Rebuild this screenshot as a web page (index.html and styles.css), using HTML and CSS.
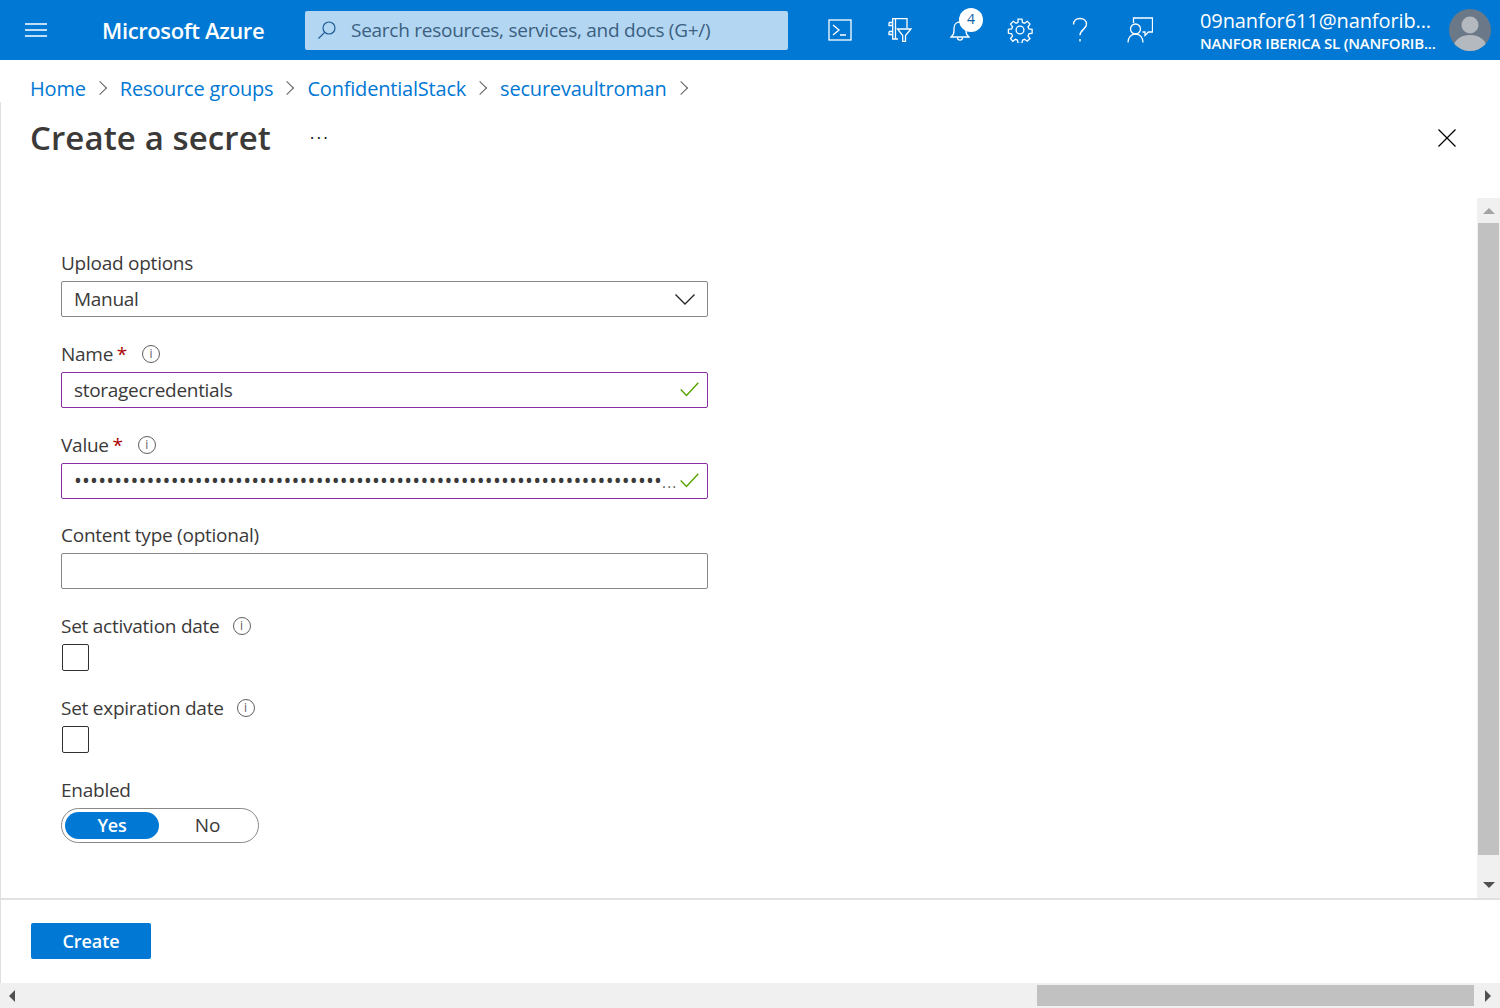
FILE: index.html
```html
<!DOCTYPE html>
<html lang="en">
<head>
    <meta charset="UTF-8">
    <title>Create a secret - Microsoft Azure</title>
    <link rel="stylesheet" href="styles.css">
</head>
<body>
    <header class="topbar">
        <button class="menu-btn" aria-label="Menu">
            <svg width="24" height="16" viewBox="0 0 24 16"><path d="M1 2h22M1 8h22M1 14h22" stroke="#fff" stroke-width="1.3" fill="none"/></svg>
        </button>
        <div class="brand">Microsoft Azure</div>
        <div class="search">
            <svg width="20" height="20" viewBox="0 0 20 20" fill="none" stroke="#1d5a94" stroke-width="1.2"><circle cx="12" cy="8" r="6"/><path d="M7.6 12.4 1.5 18.5"/></svg>
            <span>Search resources, services, and docs (G+/)</span>
        </div>
        <div class="top-icons">
            <button class="top-icon" aria-label="Cloud Shell">
                <svg width="24" height="22" viewBox="0 0 24 22" fill="none" stroke="#fff" stroke-width="1.3"><rect x="1" y="1" width="22" height="20"/><path d="M5 6l6 5-6 5M12 16h6"/></svg>
            </button>
            <button class="top-icon" aria-label="Directories">
                <svg width="24" height="24" viewBox="0 0 24 24" fill="none" stroke="#fff" stroke-width="1.3"><path d="M19 10V.7H4.700V21H10"/><path d="M7.500 .7V21M1 4.500h3.700M1 4.500v3h3.700M1 13.500h3.700M1 13.500v3h3.700"/><path d="M9.500 11H23l-5.500 6.500v6h-2.800v-6z"/></svg>
            </button>
            <button class="top-icon notif" aria-label="Notifications">
                <svg width="20" height="23" viewBox="0 0 20 23" fill="none" stroke="#fff" stroke-width="1.300"><path d="M1 18h18c-2-1.500-3-3-3-6V9c0-3.500-2.500-6-6-6S4 5.500 4 9v3c0 3-1 4.500-3 6z"/><path d="M7.500 18.500c0 3.500 5 3.500 5 0"/></svg>
                <span class="badge">4</span>
            </button>
            <button class="top-icon" aria-label="Settings">
                <svg width="26" height="26" viewBox="0 0 24 24" fill="none" stroke="#fff" stroke-width="1.200"><circle cx="12" cy="12" r="3.600"/><path d="M10.200 2h3.600l.5 3 1.900.8 2.500-1.800 2.500 2.500-1.800 2.500.8 1.900 3 .5v3.600l-3 .5-.8 1.900 1.800 2.500-2.500 2.500-2.500-1.800-1.900.8-.5 3h-3.600l-.5-3-1.900-.8-2.500 1.800L3.300 19.900l1.800-2.500-.8-1.900-3-.5v-3.600l3-.5.8-1.900-1.800-2.500L5.800 4l2.500 1.800 1.900-.8z"/></svg>
            </button>
            <button class="top-icon" aria-label="Help">
                <svg width="16" height="26" viewBox="0 0 16 26" fill="none" stroke="#fff" stroke-width="1.400"><path d="M1.500 7.500C1.500 3.800 4.300 1.500 8 1.500s6.500 2.400 6.500 5.800c0 5-6.500 5.200-6.500 11"/><path d="M8 22v2.500"/></svg>
            </button>
            <button class="top-icon" aria-label="Feedback">
                <svg width="26" height="26" viewBox="0 0 26 26" fill="none" stroke="#fff" stroke-width="1.300"><path d="M6.500 6V1h19v14h-4l-3.500 3.500V15h-2.500"/><circle cx="8.500" cy="12" r="5"/><path d="M1 25.500c0-5 3-8.500 7.500-8.500s7.500 3.500 7.500 8.500"/></svg>
            </button>
        </div>
        <div class="account">
            <div class="account-mail">09nanfor611@nanforib...</div>
            <div class="account-org">NANFOR IBERICA SL (NANFORIB...</div>
        </div>
        <svg class="avatar" width="42" height="42" viewBox="0 0 42 42"><defs><clipPath id="avatarClip"><circle cx="21" cy="21" r="21"/></clipPath></defs><circle cx="21" cy="21" r="21" fill="#6b7888"/><g clip-path="url(#avatarClip)" fill="#b4b9bf"><circle cx="21" cy="16" r="8.500"/><path d="M4 42c0-11 7-16 17-16s17 5 17 16z"/></g></svg>
    </header>

    <nav class="breadcrumb">
        <a href="#">Home</a><span class="crumb-sep"></span>
        <a href="#">Resource groups</a><span class="crumb-sep"></span>
        <a href="#">ConfidentialStack</a><span class="crumb-sep"></span>
        <a href="#">securevaultroman</a><span class="crumb-sep"></span>
    </nav>

    <section class="blade">
        <div class="blade-title">
            <h1>Create a secret</h1>
            <span class="more">...</span>
            <svg class="close" width="18" height="18" viewBox="0 0 18 18"><path d="M.5.500l17 17M17.500.500l-17 17" stroke="#000" stroke-width="1.200" fill="none"/></svg>
        </div>

        <div class="blade-body">
            <form class="form">
                <div class="row">
                    <label class="row-label">Upload options</label>
                    <div class="field select">
                        <span class="field-text">Manual</span>
                        <svg width="20" height="11" viewBox="0 0 20 11"><path d="M.5.500l9.500 9.500L19.500.500" stroke="#222" stroke-width="1.300" fill="none"/></svg>
                    </div>
                </div>
                <div class="row">
                    <label class="row-label">Name <span class="req">*</span><span class="info">i</span></label>
                    <div class="field valid">
                        <span class="field-text">storagecredentials</span>
                        <svg width="19" height="15" viewBox="0 0 19 15"><path d="M.7 7.500l5.800 6L18.300.700" stroke="#57a300" stroke-width="1.400" fill="none"/></svg>
                    </div>
                </div>
                <div class="row">
                    <label class="row-label">Value <span class="req">*</span><span class="info">i</span></label>
                    <div class="field valid">
                        <span class="field-text"><span class="dots">•••••••••••••••••••••••••••••••••••••••••••••••••••••••••••••••••••••••••</span><span class="dots-more">...</span></span>
                        <svg width="19" height="15" viewBox="0 0 19 15"><path d="M.7 7.500l5.800 6L18.300.700" stroke="#57a300" stroke-width="1.400" fill="none"/></svg>
                    </div>
                </div>
                <div class="row">
                    <label class="row-label">Content type (optional)</label>
                    <div class="field"></div>
                </div>
                <div class="row">
                    <label class="row-label">Set activation date<span class="info wide">i</span></label>
                    <div class="checkbox"></div>
                </div>
                <div class="row">
                    <label class="row-label">Set expiration date<span class="info wide">i</span></label>
                    <div class="checkbox"></div>
                </div>
                <div class="row">
                    <label class="row-label">Enabled</label>
                    <div class="toggle">
                        <span class="toggle-opt on">Yes</span>
                        <span class="toggle-opt">No</span>
                    </div>
                </div>
            </form>
            <div class="vscroll">
                <span class="arrow up"></span>
                <div class="vthumb"></div>
                <span class="arrow down"></span>
            </div>
        </div>

        <footer class="blade-footer">
            <button class="create-btn">Create</button>
        </footer>
    </section>

    <div class="hscroll">
        <span class="arrow left"></span>
        <div class="htrack"><div class="hthumb"></div></div>
        <span class="arrow right"></span>
    </div>
</body>
</html>
```

FILE: styles.css
```css
* {
    box-sizing: border-box;
}
body {
    margin: 0;
    height: 1008px;
    overflow: hidden;
    display: flex;
    flex-direction: column;
    background-color: #fff;
    color: #3b3a39;
    font-family: 'Open Sans', 'Noto Sans', sans-serif;
    font-size: 19px;
}
button {
    font-family: inherit;
    border: none;
    background: none;
    padding: 0;
}

/* top bar */
.topbar {
    height: 60px;
    flex: none;
    display: flex;
    align-items: center;
    background-color: #0078d4;
    color: #fff;
}
.menu-btn {
    width: 72px;
    display: flex;
    justify-content: center;
}
.brand {
    width: 233px;
    padding-left: 30px;
    font-size: 22px;
    font-weight: 600;
    letter-spacing: -0.38px;
    white-space: nowrap;
}
.search {
    width: 483px;
    height: 39px;
    display: flex;
    align-items: center;
    gap: 14px;
    padding-left: 12px;
    background-color: #b3d6f2;
    border-radius: 2px;
    color: #3b5f80;
    font-size: 19px;
    letter-spacing: -0.26px;
    white-space: nowrap;
}
.top-icons {
    display: flex;
    margin-left: 22px;
}
.top-icon {
    position: relative;
    width: 60px;
    height: 60px;
    display: flex;
    align-items: center;
    justify-content: center;
}
.badge {
    position: absolute;
    top: 8px;
    left: 29px;
    width: 24px;
    height: 24px;
    border-radius: 50%;
    background-color: #fff;
    color: #0f5fa8;
    font-size: 14px;
    line-height: 22px;
    text-align: center;
}
.account {
    margin-left: 30px;
    width: 249px;
    white-space: nowrap;
}
.account-mail {
    font-size: 20px;
    line-height: 26px;
    letter-spacing: -0.1px;
}
.account-org {
    font-size: 15px;
    font-weight: 600;
    line-height: 19px;
    letter-spacing: -0.2px;
}
.avatar {
    flex: none;
}

/* breadcrumb */
.breadcrumb {
    height: 42px;
    flex: none;
    display: flex;
    align-items: flex-start;
    padding: 15px 0 0 30px;
}
.breadcrumb a {
    color: #0078d4;
    text-decoration: none;
    font-size: 20px;
    line-height: 27px;
    letter-spacing: -0.2px;
}
.crumb-sep {
    width: 10px;
    height: 10px;
    margin: 8px 15px 0 9px;
    border-top: 1px solid #605e5c;
    border-right: 1px solid #605e5c;
    transform: rotate(45deg);
}

/* blade */
.blade {
    flex: 1;
    min-height: 0;
    display: flex;
    flex-direction: column;
    border-left: 1px solid #e1dfdd;
}
.blade-title {
    height: 96px;
    flex: none;
    display: flex;
    align-items: flex-start;
    padding: 16px 0 0 29px;
}
.blade-title h1 {
    margin: 0;
    font-size: 33px;
    font-weight: 600;
    line-height: 40px;
    letter-spacing: 0.1px;
}
.more {
    margin-left: 39px;
    line-height: 30px;
    font-size: 16px;
    letter-spacing: 2.6px;
    color: #000;
}
.close {
    margin-left: auto;
    margin-right: 44px;
    margin-top: 11px;
}
.blade-body {
    flex: 1;
    min-height: 0;
    display: flex;
}

/* form */
.form {
    flex: 1;
    padding: 52px 0 0 60px;
}
.row {
    width: 647px;
    margin-bottom: 23.75px;
}
.row-label {
    display: flex;
    align-items: flex-start;
    height: 31px;
    font-size: 19px;
    line-height: 26px;
    letter-spacing: -0.25px;
    white-space: pre;
}
.req {
    color: #a80000;
    margin-left: -1px;
}
.info {
    width: 18px;
    height: 18px;
    margin: 4px 0 0 15px;
    border: 1px solid #605e5c;
    border-radius: 50%;
    font-size: 12px;
    line-height: 16px;
    letter-spacing: 0;
    text-align: center;
    color: #605e5c;
}
.info.wide {
    margin-left: 13px;
}
.field {
    height: 36px;
    display: flex;
    align-items: center;
    justify-content: space-between;
    padding: 0 8px 0 12px;
    gap: 4px;
    border: 1px solid #8a8886;
    border-radius: 2px;
}
.field.valid {
    border-color: #8a2da5;
}
.field-text {
    flex: 1;
    min-width: 0;
    white-space: nowrap;
    letter-spacing: -0.3px;
}
.dots {
    font-size: 21px;
    line-height: 26px;
    letter-spacing: 0.16px;
}
.dots-more {
    font-size: 15px;
    letter-spacing: 1.2px;
    color: #605e5c;
}
.field svg {
    flex: none;
}
.select svg {
    margin-right: 4px;
}
.checkbox {
    width: 27px;
    height: 27px;
    margin-left: 1px;
    border: 1px solid #323130;
    border-radius: 2px;
}
.toggle {
    width: 198px;
    height: 35px;
    display: flex;
    align-items: center;
    padding: 0 3px;
    border: 1px solid #8a8886;
    border-radius: 18px;
}
.toggle-opt {
    width: 95px;
    height: 27px;
    line-height: 26px;
    text-align: center;
    border-radius: 14px;
    letter-spacing: -0.2px;
}
.toggle-opt.on {
    width: 94px;
    margin-right: 1px;
    background-color: #0078d4;
    color: #fff;
    font-weight: 600;
    font-size: 18px;
}

/* fake scrollbars */
.vscroll {
    width: 23px;
    flex: none;
    display: flex;
    flex-direction: column;
    align-items: center;
    background-color: #f0f0f0;
}
.vthumb {
    height: 632px;
    flex: none;
    width: 21px;
    background-color: #c1c1c1;
}
.arrow {
    flex: none;
    width: 0;
    height: 0;
}
.arrow.up {
    margin: 10px 0 9px;
    border: 6px solid transparent;
    border-top: 0;
    border-bottom-color: #a3a3a3;
}
.arrow.down {
    margin: auto 0 10px;
    border: 6px solid transparent;
    border-bottom: 0;
    border-top-color: #505050;
}
.arrow.left {
    border: 6px solid transparent;
    border-left: 0;
    border-right-color: #505050;
    margin: 0 9px;
}
.arrow.right {
    border: 6px solid transparent;
    border-right: 0;
    border-left-color: #505050;
    margin: 0 9px;
}

/* footer */
.blade-footer {
    height: 85px;
    flex: none;
    padding: 23px 0 0 30px;
    border-top: 2px solid #e1e1e1;
}
.create-btn {
    width: 120px;
    height: 36px;
    border-radius: 2px;
    background-color: #0078d4;
    color: #fff;
    font-size: 18px;
    font-weight: 600;
    letter-spacing: -0.1px;
}
.hscroll {
    height: 25px;
    flex: none;
    display: flex;
    align-items: center;
    background-color: #f0f0f0;
}
.htrack {
    flex: 1;
    height: 21px;
}
.hthumb {
    width: 437px;
    height: 100%;
    margin: 0 2px 0 auto;
    background-color: #c1c1c1;
}
```
